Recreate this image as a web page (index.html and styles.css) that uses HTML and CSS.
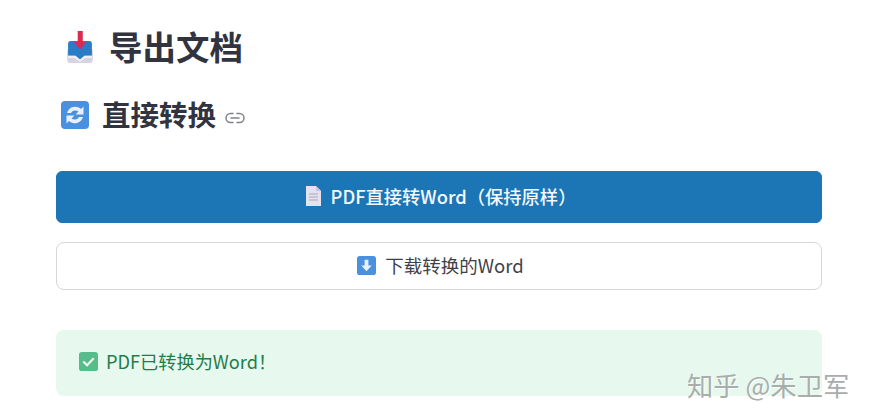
FILE: index.html
```html
<!DOCTYPE html>
<html lang="zh">
<head>
<meta charset="utf-8">
<title>导出文档</title>
<link rel="stylesheet" href="styles.css">
</head>
<body>
<main class="page">
  <h1 class="title">
    <svg class="icon-inbox" viewBox="0 0 30 36" aria-hidden="true">
      <path d="M1 22 L4 13 H26 L29 22 V31 Q29 35 25 35 H5 Q1 35 1 31 Z" fill="#d6d3e2"/>
      <path d="M2 14 Q2 11 5 11 H25 Q28 11 28 14 V27 H20 L15 31 L10 27 H2 Z" fill="#2a7cc7"/>
      <path d="M2 27 H10 L15 31 L20 27 H28 V29.500 H21 L15 33.500 L9 29.500 H2 Z" fill="#f1eff6"/>
      <path d="M12.500 0 H18 V12 H22 L15.200 20 L8.500 12 H12.500 Z" fill="#d92a52"/>
    </svg>
    <span>导出文档</span>
  </h1>
  <h2 class="subtitle">
    <svg class="icon-sq" viewBox="0 0 28 28" aria-hidden="true">
      <rect width="28" height="28" rx="4" fill="#4a90e0"/>
      <path d="M6 12 A8.500 8.500 0 0 1 20 8 L22.500 5.500 V13.500 H14.500 L17.500 10.500 A5 5 0 0 0 10 12 Z" fill="#e8f1fb"/>
      <path d="M22 16 A8.500 8.500 0 0 1 8 20 L5.500 22.500 V14.500 H13.500 L10.500 17.500 A5 5 0 0 0 18 16 Z" fill="#e8f1fb"/>
    </svg>
    <span>直接转换</span>
    <svg class="icon-link" viewBox="0 0 20 12" aria-hidden="true">
      <path d="M8 1.500 H5.500 a4.500 4.500 0 0 0 0 9 H8 M12 1.500 H14.500 a4.500 4.500 0 0 1 0 9 H12 M6 6 H14" fill="none" stroke="#808489" stroke-width="1.500" stroke-linecap="round"/>
    </svg>
  </h2>
  <button class="btn btn-primary" type="button">
    <svg class="icon-doc" viewBox="0 0 16 20" aria-hidden="true">
      <path d="M1 0 H11 L16 5 V20 H1 Z" fill="#e4e2f0"/>
      <path d="M11 0 L16 5 H11 Z" fill="#c9c6dc"/>
      <path d="M4 8 H13 M4 11 H13 M4 14 H13" stroke="#a8a6ba" stroke-width="1"/>
    </svg>
    <span>PDF直接转Word（保持原样）</span>
  </button>
  <button class="btn btn-secondary" type="button">
    <svg class="icon-small" viewBox="0 0 20 20" aria-hidden="true">
      <rect width="20" height="20" rx="3" fill="#4a90e0"/>
      <path d="M8 4 H12 V10 H15.500 L10 16 L4.500 10 H8 Z" fill="#e8f1fb"/>
    </svg>
    <span>下载转换的Word</span>
  </button>
  <div class="alert">
    <svg class="icon-small" viewBox="0 0 20 20" aria-hidden="true">
      <rect width="20" height="20" rx="3" fill="#56bd8a"/>
      <path d="M4.500 10 L8.500 14 L15.500 6.500" fill="none" stroke="#f0faf5" stroke-width="2.200"/>
    </svg>
    <span>PDF已转换为Word！</span>
  </div>
</main>
<div class="watermark">知乎 @朱卫军</div>
</body>
</html>
```
FILE: styles.css
```css
html, body {
  margin: 0;
  padding: 0;
  height: 420px;
  overflow: hidden;
  background: #fff;
}
body {
  position: relative;
  font-family: "Noto Sans CJK SC", "Noto Sans", sans-serif;
  color: #31333f;
}
.page {
  display: flex;
  flex-direction: column;
  padding: 23px 49px 0 56px;
}
.title {
  display: flex;
  align-items: center;
  gap: 15px;
  height: 46px;
  margin: 0;
  padding-left: 10px;
  font-size: 33.500px;
  font-weight: 700;
  line-height: 46px;
}
.icon-inbox {
  width: 28px;
  height: 33px;
  margin-top: 2px;
}
.subtitle {
  display: flex;
  align-items: center;
  height: 40px;
  margin: 25px 0 0;
  padding-left: 5px;
  font-size: 28.500px;
  font-weight: 700;
  line-height: 40px;
}
.icon-sq {
  width: 28px;
  height: 28px;
  margin: 2px 13px 0 0;
}
.icon-link {
  width: 20px;
  height: 12px;
  margin: 7px 0 0 9px;
}
.btn {
  display: flex;
  align-items: center;
  justify-content: center;
  box-sizing: border-box;
  width: 100%;
  font-family: inherit;
  font-size: 18.500px;
  padding: 0 0 2px 3px;
}
.btn-primary {
  gap: 10px;
  height: 52px;
  margin-top: 37px;
  background: #1c75b5;
  border: 1px solid #1c75b5;
  border-radius: 6px;
  color: #f4f9fd;
  font-size: 18.300px;
  font-weight: 500;
}
.icon-doc {
  width: 16px;
  height: 20px;
}
.btn-secondary {
  gap: 9px;
  height: 48px;
  margin-top: 19px;
  background: #fff;
  border: 1px solid #d5d6da;
  border-radius: 8px;
  color: #3f4149;
}
.icon-small {
  width: 19px;
  height: 19px;
  flex: none;
}
.alert {
  display: flex;
  align-items: center;
  gap: 8px;
  height: 66px;
  margin-top: 40px;
  padding: 0 0 4px 23px;
  box-sizing: border-box;
  background: #e7f9ee;
  border-radius: 8px;
  color: #1f7d4b;
  font-size: 18.200px;
}
.watermark {
  position: absolute;
  left: 687px;
  top: 370px;
  color: #a9adab;
  font-size: 26.300px;
  line-height: 30px;
  white-space: nowrap;
  text-shadow: 1px 1px 0 rgba(255, 255, 255, 0.8);
}
```
